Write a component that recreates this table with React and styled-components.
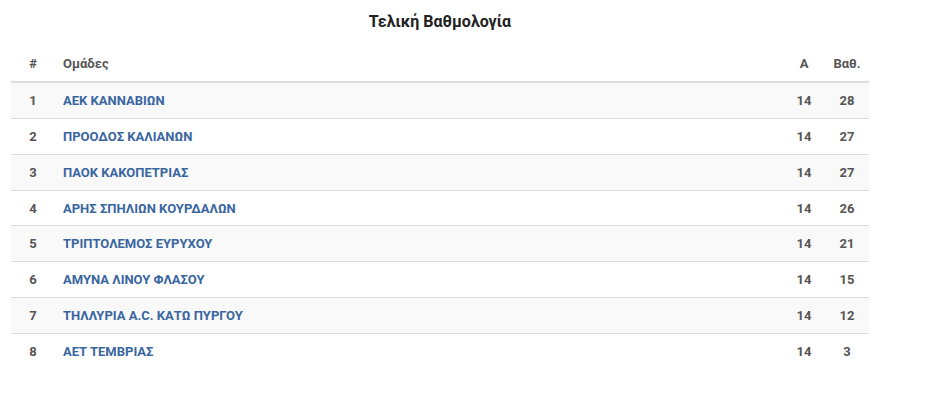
import React from "react";
import styled, { createGlobalStyle } from "styled-components";

const GlobalStyle = createGlobalStyle`
    body {
        margin: 0;
        background: #fff;
        font-family: Roboto, "Liberation Sans", sans-serif;
    }
`

const Wrapper = styled.div`
    width: 858px;
    padding: 11px 0 0 11px;
`
const Title = styled.h2`
    margin: 0 0 15px;
    text-align: center;
    font-size: 16px;
    font-weight: 700;
    line-height: 22px;
    color: #222;
`
const Table = styled.table`
    width: 100%;
    border-collapse: collapse;
    table-layout: fixed;
    font-size: 13px;
    font-weight: 700;
    color: #555;
`
const Th = styled.th`
    box-sizing: border-box;
    padding: 7px 8px 9px;
    line-height: 17px;
    text-align: ${props => props.align || "left"};
    width: ${props => props.w || "auto"};
    border-bottom: 2px solid #ddd;
`
const Row = styled.tr`
    background: ${props => props.odd ? "#f9f9f9" : "#fff"};
    border-top: 1px solid #ddd;
    &:first-child {
        border-top: none;
    }
`
const Td = styled.td`
    padding: 9px 8px 7px;
    line-height: 18.86px;
    text-align: ${props => props.align || "left"};
`
const Team = styled.a`
    color: #3a66a0;
    text-decoration: none;
`

const standings = [
    { team: "ΑΕΚ ΚΑΝΝΑΒΙΩΝ", games: 14, pts: 28 },
    { team: "ΠΡΟΟΔΟΣ ΚΑΛΙΑΝΩΝ", games: 14, pts: 27 },
    { team: "ΠΑΟΚ ΚΑΚΟΠΕΤΡΙΑΣ", games: 14, pts: 27 },
    { team: "ΑΡΗΣ ΣΠΗΛΙΩΝ ΚΟΥΡΔΑΛΩΝ", games: 14, pts: 26 },
    { team: "ΤΡΙΠΤΟΛΕΜΟΣ ΕΥΡΥΧΟΥ", games: 14, pts: 21 },
    { team: "ΑΜΥΝΑ ΛΙΝΟΥ ΦΛΑΣΟΥ", games: 14, pts: 15 },
    { team: "ΤΗΛΛΥΡΙΑ Α.C. ΚΑΤΩ ΠΥΡΓΟΥ", games: 14, pts: 12 },
    { team: "ΑΕΤ ΤΕΜΒΡΙΑΣ", games: 14, pts: 3 },
]

export default function App() {
    return (
        <>
            <GlobalStyle />
            <Wrapper>
                <Title>Τελική Βαθμολογία</Title>
                <Table>
                    <thead>
                        <tr>
                            <Th align="center" w="44px">#</Th>
                            <Th>Ομάδες</Th>
                            <Th align="center" w="42px">Α</Th>
                            <Th align="center" w="44px">Βαθ.</Th>
                        </tr>
                    </thead>
                    <tbody>
                        {standings.map((s, i) => (
                            <Row key={s.team} odd={i % 2 === 0}>
                                <Td align="center">{i + 1}</Td>
                                <Td><Team href="#">{s.team}</Team></Td>
                                <Td align="center">{s.games}</Td>
                                <Td align="center">{s.pts}</Td>
                            </Row>
                        ))}
                    </tbody>
                </Table>
            </Wrapper>
        </>
    )
}
